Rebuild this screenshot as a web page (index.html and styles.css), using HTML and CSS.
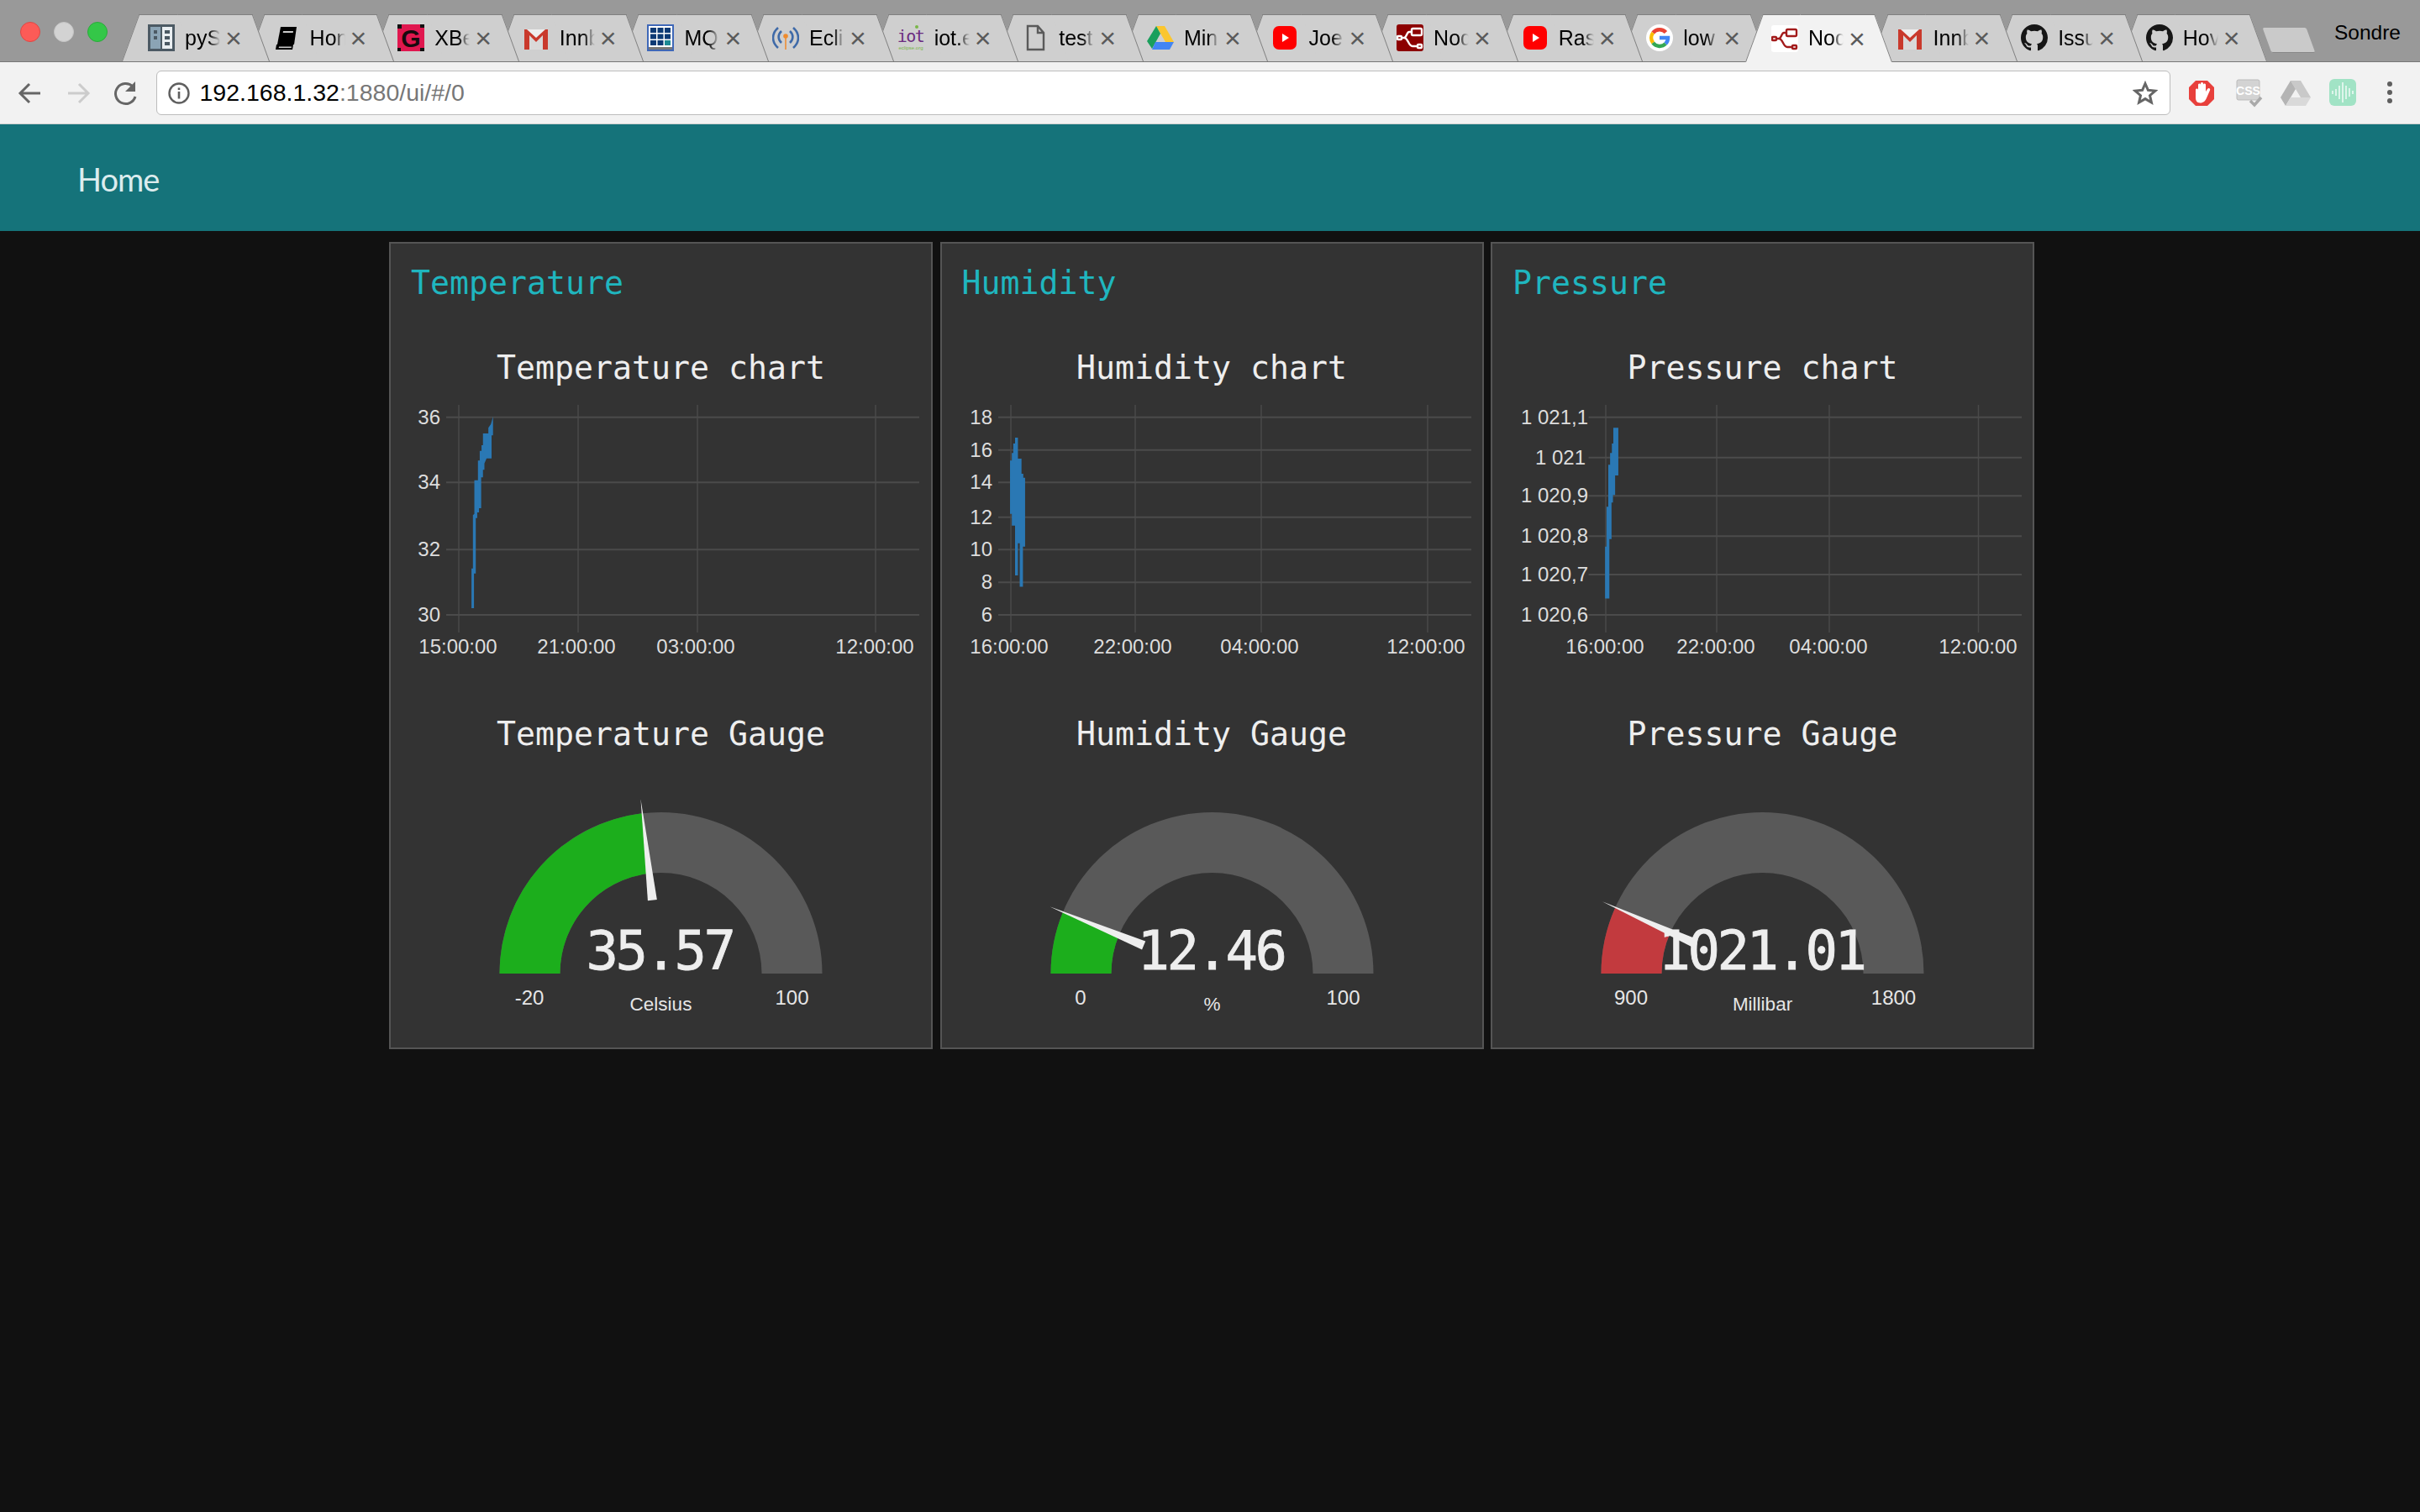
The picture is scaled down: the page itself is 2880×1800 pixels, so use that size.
FILE: index.html
```html
<!DOCTYPE html>
<html lang="en">
<head>
  <meta charset="UTF-8">
  <title>Node-RED Dashboard</title>
  <link rel="stylesheet" href="styles.css">
</head>
<body>
  <svg class="defs" width="0" height="0">
    <symbol id="gmail" viewBox="0 0 32 32">
      <path fill="#eee" d="M2 6h28v24H2z"/>
      <path fill="#d9d9d9" d="M8 30V13l8 7 8-7v17z"/>
      <path fill="#c9392c" d="M2 6h3l11 10L27 6h3v24h-6V13l-8 8-8-8v17H2z"/>
    </symbol>
    <symbol id="youtube" viewBox="0 0 32 32">
      <rect x="2" y="2" width="28" height="28" rx="7" fill="#f00"/>
      <path fill="#fff" d="M13 11l8 5-8 5z"/>
    </symbol>
    <symbol id="flow" viewBox="0 0 32 32">
      <g fill="none" stroke-width="2.4">
        <rect x="18" y="5" width="12" height="8" rx="1.5"/>
        <rect x="1" y="14" width="5" height="4" rx="1"/>
        <rect x="25" y="24" width="5" height="4" rx="1"/>
        <path d="M6 16h3c3 0 3-7 6-7h3M9 16c5 0 5 10 10 10h6"/>
      </g>
    </symbol>
    <symbol id="github" viewBox="0 0 16 16">
      <path fill="#161616" d="M8 0C3.580 0 0 3.580 0 8c0 3.540 2.290 6.530 5.470 7.590.4.070.55-.17.55-.38 0-.19-.01-.82-.01-1.490-2.010.37-2.530-.49-2.690-.94-.09-.23-.48-.94-.82-1.130-.28-.15-.68-.52-.01-.53.63-.01 1.080.58 1.230.82.72 1.210 1.870.87 2.330.66.07-.52.28-.87.51-1.070-1.780-.2-3.640-.89-3.640-3.950 0-.87.31-1.590.82-2.150-.08-.2-.36-1.020.08-2.120 0 0 .67-.21 2.200.82.64-.18 1.320-.27 2-.27.68 0 1.360.09 2 .27 1.530-1.040 2.200-.82 2.200-.82.44 1.100.16 1.920.08 2.120.51.56.82 1.270.82 2.150 0 3.070-1.870 3.750-3.650 3.950.29.25.54.73.54 1.480 0 1.070-.01 1.930-.01 2.200 0 .21.15.46.55.38A8.013 8.013 0 0016 8c0-4.420-3.580-8-8-8z"/>
    </symbol>
  </svg>

  <div class="tabstrip">
    <div class="lights">
      <span class="light red"></span>
      <span class="light grey"></span>
      <span class="light green"></span>
    </div>
    <div class="tabs">
      <div class="tab">
        <svg class="favicon" viewBox="0 0 32 32">
          <rect width="32" height="32" fill="#4c5a64"/>
          <rect x="3" y="3" width="12" height="26" fill="#8ba4b5"/>
          <rect x="17" y="3" width="12" height="26" fill="#e9eef1"/>
          <path fill="#4c5a64" d="M7 7h4v4H7zM7 14h4v4H7zM20 7h6v4h-6zM20 14h6v4h-6zM20 21h6v4h-6z"/>
        </svg>
        <span class="tab-title">pyS</span><span class="tab-close">×</span>
      </div>
      <div class="tab">
        <svg class="favicon" viewBox="0 0 32 32">
          <path fill="#000" d="M9 3h19l-3 21H5z"/>
          <path fill="#000" d="M4 24h20l-1 6H3z"/>
          <path fill="#ccc" d="M12 8h12l-.3 2H11.700zM7 26.500h15l-.3 1.500H6.700z"/>
        </svg>
        <span class="tab-title">Hon</span><span class="tab-close">×</span>
      </div>
      <div class="tab">
        <svg class="favicon" viewBox="0 0 32 32">
          <rect width="32" height="32" fill="#e0174f"/>
          <path fill="#111" d="M0 0h5v5H0zM27 0h5v4h-5zM0 28h4v4H0zM27 28h5v4h-5z"/>
          <text class="xbee-g" x="16" y="27">G</text>
        </svg>
        <span class="tab-title">XBe</span><span class="tab-close">×</span>
      </div>
      <div class="tab">
        <svg class="favicon"><use href="#gmail"/></svg>
        <span class="tab-title">Innb</span><span class="tab-close">×</span>
      </div>
      <div class="tab">
        <svg class="favicon" viewBox="0 0 32 32">
          <rect width="32" height="32" fill="#3f68b8"/>
          <rect x="2" y="2" width="28" height="28" fill="#fff"/>
          <path fill="#0d3a75" d="M4 4h7v6H4zM12.500 4h7v6h-7zM21 4h7v6h-7zM4 11.500h7v6H4zM12.500 11.500h7v6h-7zM21 11.500h7v6h-7zM4 19h7v6H4zM12.500 19h7v6h-7z"/>
          <rect x="21" y="19" width="7" height="6" fill="#1c8a94"/>
          <rect x="2" y="27" width="28" height="3" fill="#777"/>
        </svg>
        <span class="tab-title">MQ</span><span class="tab-close">×</span>
      </div>
      <div class="tab">
        <svg class="favicon" viewBox="0 0 32 32">
          <g fill="none" stroke="#3f6aa8" stroke-width="2.600">
            <path d="M7 4C-1 11-1 21 7 28M25 4c8 7 8 17 0 24"/>
            <path d="M11 8c-4.500 4-4.500 10 0 14M21 8c4.500 4 4.500 10 0 14"/>
          </g>
          <circle cx="16" cy="14" r="2.800" fill="#ef8a2c"/>
          <path stroke="#ef8a2c" stroke-width="1.500" d="M16 15v15"/>
        </svg>
        <span class="tab-title">Ecli</span><span class="tab-close">×</span>
      </div>
      <div class="tab">
        <svg class="favicon" viewBox="0 0 32 32">
          <circle cx="23" cy="3" r="2" fill="#7ab648"/>
          <text class="iot-mark" x="15.500" y="21">iot</text>
          <text class="iot-sub" x="16" y="30">eclipse.org</text>
        </svg>
        <span class="tab-title">iot.e</span><span class="tab-close">×</span>
      </div>
      <div class="tab">
        <svg class="favicon" viewBox="0 0 32 32">
          <path fill="none" stroke="#5a5a5a" stroke-width="2.400" d="M7 2h12l7 8v20H7zM19 2v8h7"/>
        </svg>
        <span class="tab-title">test</span><span class="tab-close">×</span>
      </div>
      <div class="tab">
        <svg class="favicon" viewBox="0 0 32 32">
          <path fill="#fbc62f" d="M11 2h10l11 19H22z"/>
          <path fill="#1a9f5c" d="M11 2l5 9-10 18-6-9z"/>
          <path fill="#4285f4" d="M10 21h22l-5 9H6z"/>
        </svg>
        <span class="tab-title">Min</span><span class="tab-close">×</span>
      </div>
      <div class="tab">
        <svg class="favicon"><use href="#youtube"/></svg>
        <span class="tab-title">Joe</span><span class="tab-close">×</span>
      </div>
      <div class="tab">
        <svg class="favicon node-dark"><use href="#flow"/></svg>
        <span class="tab-title">Nod</span><span class="tab-close">×</span>
      </div>
      <div class="tab">
        <svg class="favicon"><use href="#youtube"/></svg>
        <span class="tab-title">Ras</span><span class="tab-close">×</span>
      </div>
      <div class="tab">
        <svg class="favicon" viewBox="0 0 32 32">
          <circle cx="16" cy="16" r="16" fill="#fff"/>
          <g fill="none" stroke-width="4.500">
            <path stroke="#ea4335" d="M23.500 9.500A10 10 0 0 0 8.200 10"/>
            <path stroke="#fbbc05" d="M8.200 10a10 10 0 0 0 0 12"/>
            <path stroke="#34a853" d="M8.200 22a10 10 0 0 0 15 1"/>
            <path stroke="#4285f4" d="M23.200 23a10 10 0 0 0 2.800-7H16"/>
          </g>
        </svg>
        <span class="tab-title">low</span><span class="tab-close">×</span>
      </div>
      <div class="tab active">
        <svg class="favicon node-light"><use href="#flow"/></svg>
        <span class="tab-title">Nod</span><span class="tab-close">×</span>
      </div>
      <div class="tab">
        <svg class="favicon"><use href="#gmail"/></svg>
        <span class="tab-title">Innb</span><span class="tab-close">×</span>
      </div>
      <div class="tab">
        <svg class="favicon"><use href="#github"/></svg>
        <span class="tab-title">Issu</span><span class="tab-close">×</span>
      </div>
      <div class="tab">
        <svg class="favicon"><use href="#github"/></svg>
        <span class="tab-title">Hov</span><span class="tab-close">×</span>
      </div>
    </div>
    <div class="new-tab"></div>
    <div class="profile">Sondre</div>
  </div>

  <div class="toolbar">
    <svg class="nav-btn" viewBox="0 0 36 36">
      <path fill="none" stroke="#666" stroke-width="3" d="M30 18H7M17 7L6 18l11 11"/>
    </svg>
    <svg class="nav-btn" viewBox="0 0 36 36">
      <path fill="none" stroke="#ccc" stroke-width="3" d="M6 18h23M19 7l11 11-11 11"/>
    </svg>
    <svg class="nav-btn" viewBox="0 0 36 36">
      <path fill="none" stroke="#666" stroke-width="3" d="M27 10a12 12 0 1 0 3 12"/>
      <path fill="#666" d="M30 4v12H18z"/>
    </svg>
    <div class="address">
      <svg class="info" viewBox="0 0 26 26">
        <circle cx="13" cy="13" r="11.500" fill="none" stroke="#5f5f5f" stroke-width="2.400"/>
        <path fill="#5f5f5f" d="M11.700 11h2.600v8.500h-2.600zM11.700 6.500h2.600v2.600h-2.600z"/>
      </svg>
      <span class="url">192.168.1.32<span class="url-rest">:1880/ui/#/0</span></span>
      <svg class="star" viewBox="0 0 30 30">
        <path fill="none" stroke="#666" stroke-width="3" d="M15 3.500l3.400 7.800 8.500.8-6.400 5.600 1.900 8.300-7.400-4.400-7.400 4.400 1.900-8.300L3.100 12.100l8.500-.8z"/>
      </svg>
    </div>
    <div class="extensions">
      <svg class="ext" viewBox="0 0 36 36">
        <path fill="#e8403c" d="M11 3h14l8 8v14l-8 8H11l-8-8V11z"/>
        <path fill="#fff" d="M11 14c0-2 3-2 3 0V8c0-2 3-2 3 0V6.500c0-2 3-2 3 0V8c0-2 3-2 3 0v8l2-3c1.500-2 4-.5 3 1.500l-3.500 8c-2 5-4.500 7-8 7-4 0-5.500-3-5.500-6z"/>
      </svg>
      <svg class="ext" viewBox="0 0 36 36">
        <rect x="4" y="2" width="27" height="24" rx="2" fill="#d3d3d3" stroke="#bbb"/>
        <text class="css-mark" x="17.500" y="20">CSS</text>
        <path fill="none" stroke="#aaa" stroke-width="3.500" d="M20 27l5 5 8-9"/>
      </svg>
      <svg class="ext" viewBox="0 0 36 36">
        <path fill="#c9c9c9" d="M12 3h12l12 20H24z"/>
        <path fill="#b4b4b4" d="M12 3l6 10-12 20-6-10z"/>
        <path fill="#d9d9d9" d="M12 23h24l-6 10H6z"/>
      </svg>
      <svg class="ext" viewBox="0 0 36 36">
        <rect x="2" y="1" width="32" height="32" rx="6" fill="#a1e3c5"/>
        <path fill="none" stroke="#fff" stroke-width="1.300" d="M6 15v4M10 13v8M14 9v16M18 5v24M22 9v16M26 12v10M30 15v4"/>
      </svg>
      <svg class="ext" viewBox="0 0 36 36">
        <circle cx="18" cy="7" r="3" fill="#5f5f5f"/>
        <circle cx="18" cy="17" r="3" fill="#5f5f5f"/>
        <circle cx="18" cy="27" r="3" fill="#5f5f5f"/>
      </svg>
    </div>
  </div>

  <header class="ui-header">Home</header>

  <main class="dashboard">
    <section class="group">
      <h2 class="group-title">Temperature</h2>
      <h3 class="widget-title">Temperature chart</h3>
      <svg class="chart">
        <g class="grid">
          <path d="M81 12V283M223 12V283M365 12V283M577 12V283"/>
          <path class="grid-h" d="M66 26.700H629M66 104.300H629M66 184.300H629M66 262H629"/>
        </g>
        <polygon class="series" transform="translate(-15,-190) scale(.4273,.3333)" points="260,1332 260,1190 264,1190 264,1000 268,995 268,875 278,875 278,805 283,805 283,770 288,770 288,750 292,750 292,708 307,708 307,688 314,675 320,648 320,715 316,715 316,797 302,797 296,815 296,838 292,838 292,865 287,865 287,975 281,975 281,990 276,990 276,1010 272,1010 272,1208 267,1208 267,1332"/>
        <g class="ticks-y">
          <text x="59" y="35">36</text>
          <text x="59" y="112">34</text>
          <text x="59" y="192">32</text>
          <text x="59" y="270">30</text>
        </g>
        <g class="ticks-x">
          <text x="80" y="308">15:00:00</text>
          <text x="221" y="308">21:00:00</text>
          <text x="363" y="308">03:00:00</text>
          <text x="576" y="308">12:00:00</text>
        </g>
      </svg>
      <h3 class="widget-title gauge-title">Temperature Gauge</h3>
      <svg class="gauge">
        <g transform="translate(321.500,255)">
          <path class="arc-bg" d="M-192 0A192 192 0 0 1 192 0H120A120 120 0 0 0 -120 0Z"/>
          <path class="arc-green" d="M-192 0A192 192 0 0 1 -22.100 -190.700L-13.800 -119.200A120 120 0 0 0 -120 0Z"/>
          <polygon class="needle" points="-209,0 -88,-5.500 -88,5.500" transform="rotate(83.400)"/>
          <text class="gauge-value" x="-1.500" y="-5">35.57</text>
          <text class="gauge-label" x="-156.500" y="37">-20</text>
          <text class="gauge-label" x="156" y="37">100</text>
          <text class="gauge-units" y="44">Celsius</text>
        </g>
      </svg>
    </section>

    <section class="group">
      <h2 class="group-title">Humidity</h2>
      <h3 class="widget-title">Humidity chart</h3>
      <svg class="chart">
        <g class="grid">
          <path d="M82 12V283M230 12V283M380 12V283M578 12V283"/>
          <path class="grid-h" d="M67 26.700H630M67 65.700H630M67 104.300H630M67 145.700H630M67 184.300H630M67 223.300H630M67 262H630"/>
        </g>
        <polygon class="series" transform="translate(-10,-190) scale(.4273,.3333)" points="240,1256 240,1100 235,1100 235,1215 227,1215 227,1037 218,1037 218,995 213,995 213,805 218,805 218,778 222,778 222,744 227,744 227,723 235,723 235,798 245,798 245,852 250,852 250,866 255,866 255,1112 249,1112 249,1256"/>
        <g class="ticks-y">
          <text x="60" y="35">18</text>
          <text x="60" y="74">16</text>
          <text x="60" y="112">14</text>
          <text x="60" y="154">12</text>
          <text x="60" y="192">10</text>
          <text x="60" y="231">8</text>
          <text x="60" y="270">6</text>
        </g>
        <g class="ticks-x">
          <text x="80" y="308">16:00:00</text>
          <text x="227" y="308">22:00:00</text>
          <text x="378" y="308">04:00:00</text>
          <text x="576" y="308">12:00:00</text>
        </g>
      </svg>
      <h3 class="widget-title gauge-title">Humidity Gauge</h3>
      <svg class="gauge">
        <g transform="translate(321.500,255)">
          <path class="arc-bg" d="M-192 0A192 192 0 0 1 192 0H120A120 120 0 0 0 -120 0Z"/>
          <path class="arc-green" d="M-192 0A192 192 0 0 1 -177.500 -73.200L-110.900 -45.700A120 120 0 0 0 -120 0Z"/>
          <polygon class="needle" points="-209,0 -88,-5.500 -88,5.500" transform="rotate(22.400)"/>
          <text class="gauge-value" x="-1.500" y="-5">12.46</text>
          <text class="gauge-label" x="-156.500" y="37">0</text>
          <text class="gauge-label" x="156" y="37">100</text>
          <text class="gauge-units" y="44">%</text>
        </g>
      </svg>
    </section>

    <section class="group">
      <h2 class="group-title">Pressure</h2>
      <h3 class="widget-title">Pressure chart</h3>
      <svg class="chart">
        <g class="grid">
          <path d="M135 12V283M267 12V283M401 12V283M578.500 12V283"/>
          <path class="grid-h" d="M114.500 26.700H630M114.500 74.700H630M114.500 120.300H630M114.500 168.300H630M114.500 214H630M114.500 262H630"/>
        </g>
        <polygon class="series" transform="translate(-6,-190) scale(.4273,.3333)" points="328,1298 328,1112 332,1112 332,970 337,970 337,820 342,820 342,778 347,778 347,744 351,744 351,688 365,688 365,858 356,858 356,928 350,928 350,955 346,955 346,1085 340,1085 340,1298"/>
        <g class="ticks-y">
          <text x="114" y="35">1 021,1</text>
          <text x="111" y="83">1 021</text>
          <text x="114" y="128">1 020,9</text>
          <text x="114" y="176">1 020,8</text>
          <text x="114" y="222">1 020,7</text>
          <text x="114" y="270">1 020,6</text>
        </g>
        <g class="ticks-x">
          <text x="134" y="308">16:00:00</text>
          <text x="266" y="308">22:00:00</text>
          <text x="400" y="308">04:00:00</text>
          <text x="578" y="308">12:00:00</text>
        </g>
      </svg>
      <h3 class="widget-title gauge-title">Pressure Gauge</h3>
      <svg class="gauge">
        <g transform="translate(321.500,255)">
          <path class="arc-bg" d="M-192 0A192 192 0 0 1 192 0H120A120 120 0 0 0 -120 0Z"/>
          <path class="arc-red" d="M-192 0A192 192 0 0 1 -175.100 -78.700L-109.500 -49.200A120 120 0 0 0 -120 0Z"/>
          <polygon class="needle" points="-209,0 -88,-5.500 -88,5.500" transform="rotate(24.200)"/>
          <text class="gauge-value" x="-1.500" y="-5">1021.01</text>
          <text class="gauge-label" x="-156.500" y="37">900</text>
          <text class="gauge-label" x="156" y="37">1800</text>
          <text class="gauge-units" y="44">Millibar</text>
        </g>
      </svg>
    </section>
  </main>
</body>
</html>
```

FILE: styles.css
```css
* {
  box-sizing: border-box;
}
body {
  margin: 0;
  height: 1800px;
  overflow: hidden;
  background: #111;
  font-family: "Liberation Sans", Arial, sans-serif;
}
.defs {
  display: block;
  height: 0;
}

/* browser chrome */
.tabstrip {
  display: flex;
  height: 74px;
  background: #999;
  border-bottom: 1px solid #767676;
}
.lights {
  display: flex;
  gap: 16px;
  width: 145px;
  flex: none;
  padding: 26px 0 0 24px;
}
.light {
  width: 24px;
  height: 24px;
  border-radius: 50%;
}
.light.red { background: #fc5b57; border: 1px solid #df4744; }
.light.grey { background: #d3d3d3; border: 1px solid #c4c4c4; }
.light.green { background: #34c748; border: 1px solid #2aab3b; }
.tabs {
  display: flex;
  padding-top: 17px;
}
.tab {
  position: relative;
  display: flex;
  align-items: center;
  width: 175px;
  height: 56px;
  margin-right: -26.400px;
  padding-left: 31px;
}
.tab::before,
.tab::after {
  content: "";
  position: absolute;
  z-index: -1;
  top: 0;
  bottom: 0;
  width: 50%;
  background: #cfcfcf;
  border-top: 1px solid #7f7f7f;
}
.tab::before {
  left: 0;
  border-left: 1px solid #7f7f7f;
  transform-origin: 0 100%;
  transform: skewX(-20deg);
}
.tab::after {
  right: 0;
  border-right: 1px solid #7f7f7f;
  transform-origin: 100% 100%;
  transform: skewX(20deg);
}
.tab:nth-child(1) { z-index: 17; }
.tab:nth-child(2) { z-index: 16; }
.tab:nth-child(3) { z-index: 15; }
.tab:nth-child(4) { z-index: 14; }
.tab:nth-child(5) { z-index: 13; }
.tab:nth-child(6) { z-index: 12; }
.tab:nth-child(7) { z-index: 11; }
.tab:nth-child(8) { z-index: 10; }
.tab:nth-child(9) { z-index: 9; }
.tab:nth-child(10) { z-index: 8; }
.tab:nth-child(11) { z-index: 7; }
.tab:nth-child(12) { z-index: 6; }
.tab:nth-child(13) { z-index: 5; }
.tab:nth-child(14) { z-index: 4; }
.tab:nth-child(15) { z-index: 3; }
.tab:nth-child(16) { z-index: 2; }
.tab:nth-child(17) { z-index: 1; }
.tab.active {
  z-index: 20;
  height: 57px;
}
.tab.active::before,
.tab.active::after {
  background: #f2f2f2;
}
.favicon {
  width: 32px;
  height: 32px;
  flex: none;
}
.node-dark {
  background: #8c0000;
  border-radius: 3px;
  stroke: #fff;
}
.node-light {
  background: #fff;
  border-radius: 3px;
  stroke: #a31c1c;
}
.xbee-g {
  font: bold 30px "Liberation Sans", sans-serif;
  text-anchor: middle;
  fill: #180a0e;
}
.iot-mark {
  font: 20px "DejaVu Sans Mono", monospace;
  letter-spacing: -1.500px;
  text-anchor: middle;
  fill: #6b2c80;
}
.iot-sub {
  font: 6px "Liberation Sans", sans-serif;
  text-anchor: middle;
  fill: #7ab648;
}
.css-mark {
  font: bold 14px "Liberation Sans", sans-serif;
  text-anchor: middle;
  fill: #fff;
}
.tab-title {
  flex: none;
  width: 42px;
  margin-left: 12px;
  white-space: nowrap;
  font-size: 25px;
  color: #000;
  -webkit-mask-image: linear-gradient(90deg, #000 68%, transparent);
  mask-image: linear-gradient(90deg, #000 68%, transparent);
}
.tab-close {
  margin-left: 6px;
  font-size: 34px;
  line-height: 1;
  color: #5a5a5a;
}
.new-tab {
  flex: none;
  width: 52px;
  height: 30px;
  margin: 33px 0 0 27px;
  background: #cacaca;
  border-bottom: 1px solid #888;
  border-radius: 2px;
  transform: skewX(20deg);
}
.profile {
  margin-left: auto;
  padding: 25px 23px 0 0;
  font-size: 24.500px;
  color: #000;
}
.toolbar {
  display: flex;
  align-items: center;
  height: 74px;
  padding-left: 18px;
  background: #f2f2f2;
  border-bottom: 1px solid #d0d0d0;
}
.nav-btn {
  width: 36px;
  height: 36px;
  flex: none;
  margin-right: 20.500px;
}
.address {
  display: flex;
  align-items: center;
  width: 2397px;
  height: 53px;
  margin-left: -2px;
  padding: 0 14px 0 13px;
  background: #fff;
  border: 1px solid #bcbcbc;
  border-radius: 6px;
}
.info {
  width: 26px;
  height: 26px;
}
.url {
  margin-left: 12px;
  font-size: 28.500px;
  color: #000;
}
.url-rest {
  color: #777;
}
.star {
  width: 30px;
  height: 30px;
  margin-left: auto;
}
.extensions {
  display: flex;
  gap: 20px;
  margin-left: 19px;
}
.ext {
  width: 36px;
  height: 36px;
}

/* dashboard */
.ui-header {
  height: 127px;
  padding-left: 92px;
  background: #15737a;
  font: 38px/130px Lato, sans-serif;
  letter-spacing: -1px;
  color: #dcecee;
}
.dashboard {
  display: flex;
  gap: 8.500px;
  padding: 13px 0 0 463px;
}
.group {
  width: 647px;
  height: 961px;
  background: #333;
  border: 2px solid #555;
}
.group-title {
  margin: 0 0 24px;
  padding-left: 24px;
  font: 38.200px/94px "DejaVu Sans Mono", monospace;
  color: #1fb6bf;
}
.widget-title {
  margin: 0 0 2px;
  font: 38.200px/60px "DejaVu Sans Mono", monospace;
  text-align: center;
  color: #eee;
}
.gauge-title {
  margin: 44px 0 0;
}
.chart {
  display: block;
  width: 643px;
  height: 330px;
}
.grid path {
  fill: none;
  stroke: #4a4a4a;
  stroke-width: 1.500;
}
.grid .grid-h {
  stroke: #4b4b4b;
  stroke-width: 2;
}
.series {
  fill: #2a78b4;
}
.ticks-y,
.ticks-x {
  font-size: 24px;
  fill: #ddd;
}
.ticks-y {
  text-anchor: end;
}
.ticks-x {
  text-anchor: middle;
}
.gauge {
  display: block;
  width: 643px;
  height: 343px;
}
.arc-bg { fill: #595959; }
.arc-green { fill: #1cae1c; }
.arc-red { fill: #c23a3e; }
.needle { fill: #eee; }
.gauge-value {
  font: 64px "DejaVu Sans Mono", monospace;
  letter-spacing: -3.500px;
  text-anchor: middle;
  fill: #eee;
  stroke: #eee;
  stroke-width: .8px;
}
.gauge-label {
  font-size: 24px;
  text-anchor: middle;
  fill: #e6e6e6;
}
.gauge-units {
  font-size: 22.500px;
  text-anchor: middle;
  fill: #e6e6e6;
}
```
